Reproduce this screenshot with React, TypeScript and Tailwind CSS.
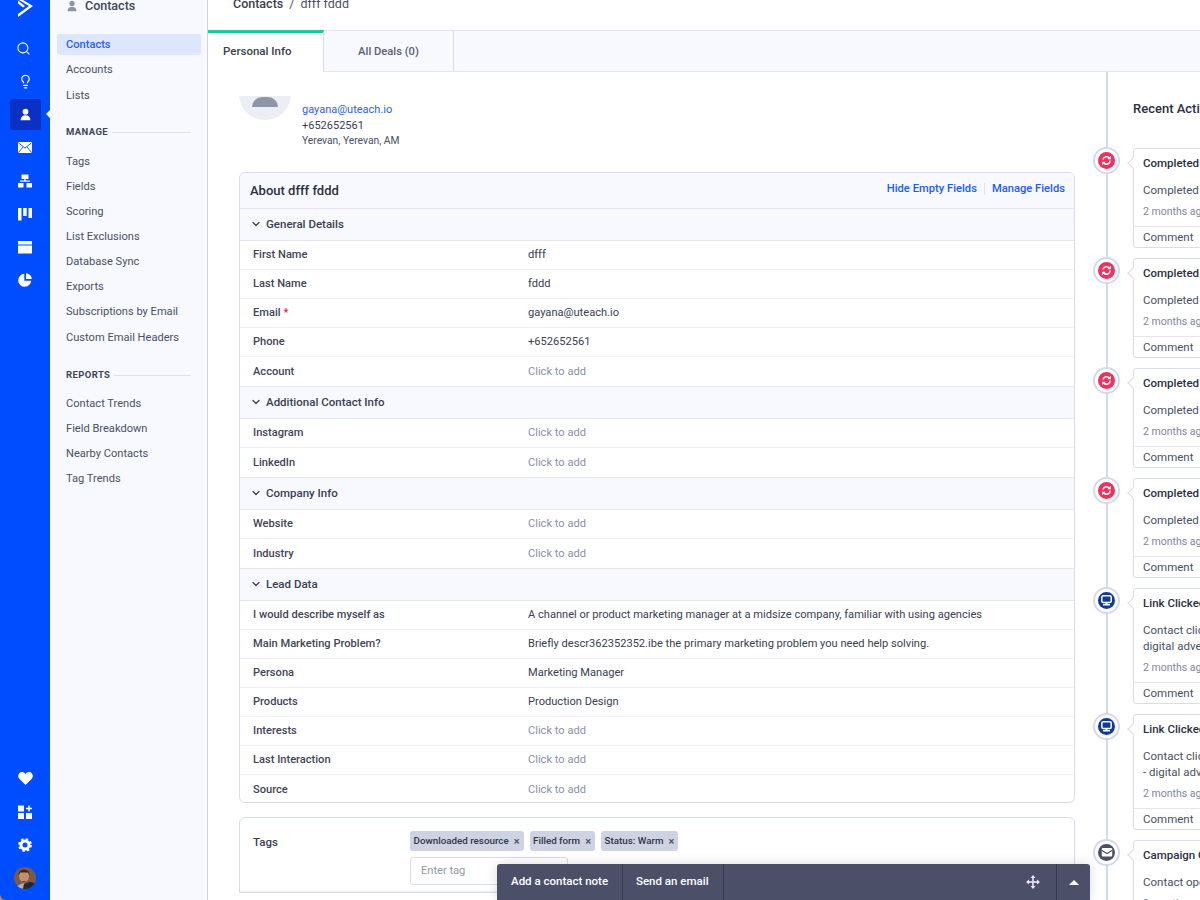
import React from "react";
import { Search, Lightbulb, ChevronDown } from "lucide-react";

const font = "font-['Roboto','Liberation_Sans',sans-serif]";

function UserIcon({ c = "#fff", s = 16 }: { c?: string; s?: number }) {
  return (
    <svg width={s} height={s} viewBox="0 0 16 16" fill={c}>
      <circle cx="8" cy="4.5" r="3.5" />
      <path d="M2 15c0-4 2.5-6 6-6s6 2 6 6z" />
    </svg>
  );
}

function RailIcon({ children, active }: { children: React.ReactNode; active?: boolean }) {
  return (
    <div className="relative flex h-[33px] w-full items-center justify-center">
      {active && (
        <>
          <div className="absolute left-[10px] top-[1px] h-[31px] w-[31px] rounded-[3px] bg-[#0a30c4]" />
          <div className="absolute left-[46px] top-[12px] h-0 w-0 border-y-[4px] border-r-[4px] border-y-transparent border-r-white" />
        </>
      )}
      <div className="relative flex items-center justify-center">{children}</div>
    </div>
  );
}

function Rail() {
  return (
    <div className="h-full w-[50px] shrink-0 bg-[#d9822b]">
      <div className="flex h-full w-full flex-col items-center rounded-bl-[6px] bg-[#004cff]">
        <svg width="20" height="18" viewBox="0 0 20 18" className="-ml-[1px] shrink-0" fill="#fff">
          <path d="M3 -3 L18 6 L3 17 L3 14 L14 6 L3 -0.500z" />
          <path d="M3 0.500 L10 6 L8 7.500 L3 3.500z" />
        </svg>
        <div className="mt-[14px] w-full">
          <RailIcon><div className="-ml-[3px]"><Search size={15} color="#fff" strokeWidth={1.7} /></div></RailIcon>
          <RailIcon><Lightbulb size={15} color="#fff" strokeWidth={2} /></RailIcon>
          <RailIcon active><UserIcon s={13} /></RailIcon>
          <RailIcon>
            <svg width="14" height="11" viewBox="0 0 14 11"><rect width="14" height="11" rx="1" fill="#fff" /><path d="M0.500 1 L7 6 L13.500 1 M0.500 10.500 L5 5 M13.500 10.500 L9 5" stroke="#004cff" strokeWidth="0.9" fill="none" /></svg>
          </RailIcon>
          <RailIcon>
            <svg width="14" height="14" viewBox="0 0 14 14" fill="#fff"><rect x="3.500" y="0.500" width="7" height="4.500" /><rect x="6.300" y="5" width="1.400" height="2" /><rect x="2" y="6.500" width="10" height="1.200" /><rect x="0" y="9" width="5.500" height="4.500" /><rect x="8.500" y="9" width="5.500" height="4.500" /></svg>
          </RailIcon>
          <RailIcon>
            <svg width="14" height="14" viewBox="0 0 14 14" fill="#fff"><rect x="0" y="1" width="3.500" height="12.500" /><rect x="5.200" y="1" width="3.500" height="8" /><rect x="10.500" y="1" width="3.500" height="10" /></svg>
          </RailIcon>
          <RailIcon>
            <svg width="14" height="14" viewBox="0 0 14 14" fill="#fff"><path d="M0 1h14v3.500H0z" /><path d="M0 5.500h14V13.500H0z" /></svg>
          </RailIcon>
          <RailIcon>
            <svg width="14" height="14" viewBox="0 0 14 14" fill="#fff"><path d="M6.300 0.800A6.500 6.500 0 1 0 13.200 7.700H6.300z" /><path d="M8 0.200A6 6 0 0 1 13.800 6H8z" /></svg>
          </RailIcon>
        </div>
        <div className="mt-auto w-full pb-[11px]">
          <RailIcon>
            <svg width="15" height="13" viewBox="0 0 15 13" fill="#fff"><path d="M7.500 13 L1 6.500 C-1 3.500 1 0 4 0 C5.500 0 6.800 0.800 7.500 2 C8.200 0.800 9.500 0 11 0 C14 0 16 3.500 14 6.500Z" /></svg>
          </RailIcon>
          <RailIcon>
            <svg width="14" height="14" viewBox="0 0 14 14" fill="#fff"><rect x="0" y="0.500" width="6" height="6" /><rect x="0" y="8" width="6" height="6" /><rect x="8" y="8" width="6" height="6" /><path d="M10.300 0.500h1.400v2.300H14v1.400h-2.300v2.300h-1.400V4.200H8V2.800h2.300z" /></svg>
          </RailIcon>
          <RailIcon>
            <svg width="14" height="14" viewBox="0 0 14 14"><circle cx="7" cy="7" r="4" fill="none" stroke="#fff" strokeWidth="3" /><circle cx="7" cy="7" r="5.800" fill="none" stroke="#fff" strokeWidth="2.200" strokeDasharray="2.400 2.150" /></svg>
          </RailIcon>
          <div className="mt-[6px] flex justify-center">
            <svg width="22" height="22" viewBox="0 0 22 22" className="rounded-full">
              <rect width="22" height="22" fill="#7d5a44" />
              <ellipse cx="10" cy="9.500" rx="5" ry="6" fill="#c0906f" />
              <path d="M4.500 8C4 1 16 1 15.500 8L14.500 5.500H6z" fill="#3a2419" />
              <path d="M5.500 11C6.500 16.500 13.500 16.500 14.500 11L13.500 14H6.500z" fill="#6a4630" />
              <path d="M7 22C8 17 14 15 17 15S22 18 22 22z" fill="#1c2b3a" />
              <path d="M2 22C3 18 7 17 10 16L9 22z" fill="#a9b3bf" />
            </svg>
          </div>
        </div>
      </div>
    </div>
  );
}

function NavItem({ label, active }: { label: string; active?: boolean }) {
  return (
    <div className={`flex h-[21px] items-center px-[9px] pt-[2px] text-[11.1px] ${active ? "rounded-[3px] bg-[#dde7fb] font-medium text-[#2a62f0]" : "text-[#4a5062]"}`}>
      {label}
    </div>
  );
}

function NavHeading({ label }: { label: string }) {
  return (
    <div className="flex h-[16px] items-center gap-[4px] pl-[9px] pr-[10px]">
      <span className="text-[9.5px] font-bold tracking-[0.4px] text-[#3f4556]">{label}</span>
      <div className="h-px flex-1 bg-[#dfe2ee]" />
    </div>
  );
}

function Sidebar() {
  return (
    <div className="h-full w-[158px] shrink-0 border-r border-[#cfd3e6] bg-[#f7f9fe] pl-[7px] pr-[6px]">
      <div className="-mt-[4px] flex h-[20px] items-center gap-[7px] pl-[9px]">
        <UserIcon c="#8f95a8" s={12} />
        <span className="text-[12.5px] font-medium text-[#3f4556]">Contacts</span>
      </div>
      <div className="mt-[18px] flex flex-col gap-[4.2px]">
        <NavItem label="Contacts" active />
        <NavItem label="Accounts" />
        <NavItem label="Lists" />
      </div>
      <div className="mt-[19px]"><NavHeading label="MANAGE" /></div>
      <div className="mt-[10px] flex flex-col gap-[4.150px]">
        {["Tags", "Fields", "Scoring", "List Exclusions", "Database Sync", "Exports", "Subscriptions by Email", "Custom Email Headers"].map((l) => (
          <NavItem key={l} label={l} />
        ))}
      </div>
      <div className="mt-[20px]"><NavHeading label="REPORTS" /></div>
      <div className="mt-[9px] flex flex-col gap-[4.200px]">
        {["Contact Trends", "Field Breakdown", "Nearby Contacts", "Tag Trends"].map((l) => (
          <NavItem key={l} label={l} />
        ))}
      </div>
    </div>
  );
}

function Section({ title }: { title: string }) {
  return (
    <div className="flex h-[33px] items-center gap-[4px] border-y border-[#e3e6f0] bg-[#f7f9fe] pb-[0.5px] pl-[10px] text-[11.5px] font-medium text-[#3a4050]">
      <ChevronDown size={12} strokeWidth={2.5} color="#3a4050" />
      {title}
    </div>
  );
}

function Row({ label, value, req, last }: { label: string; value?: string; req?: boolean; last?: boolean }) {
  return (
    <div className={`flex h-[29px] items-center pl-[13px] pt-[1.5px] text-[11.1px] ${last ? "" : "border-b border-[#eef0f6]"}`}>
      <div className="w-[275px] font-medium text-[#3f4556]">
        {label}
        {req && <span className="ml-[3px] text-[#e8264f]">*</span>}
      </div>
      <div className={value ? "text-[#3a4050]" : "text-[#8b90a5]"}>{value ?? "Click to add"}</div>
    </div>
  );
}

function AboutCard() {
  return (
    <div className="mx-[31px] h-[631px] overflow-hidden rounded-[6px] border border-[#d9dcea]">
      <div className="flex h-[35px] items-center justify-between bg-[#f7f9fe] pl-[10px] pr-[9px]">
        <span className="mt-[1px] text-[13px] font-medium text-[#2b3040]">About dfff fddd</span>
        <div className="-mt-[3px] flex items-center text-[11.2px] font-medium text-[#1f5bf0]">
          <span>Hide Empty Fields</span>
          <div className="mx-[7px] h-[12px] w-px bg-[#dfe2ee]" />
          <span>Manage Fields</span>
        </div>
      </div>
      <Section title="General Details" />
      <Row label="First Name" value="dfff" />
      <Row label="Last Name" value="fddd" />
      <Row label="Email" value="gayana@uteach.io" req />
      <Row label="Phone" value="+652652561" />
      <Row label="Account" last />
      <Section title="Additional Contact Info" />
      <Row label="Instagram" />
      <Row label="LinkedIn" last />
      <Section title="Company Info" />
      <Row label="Website" />
      <Row label="Industry" last />
      <Section title="Lead Data" />
      <Row label="I would describe myself as" value="A channel or product marketing manager at a midsize company, familiar with using agencies" />
      <Row label="Main Marketing Problem?" value="Briefly descr362352352.ibe the primary marketing problem you need help solving." />
      <Row label="Persona" value="Marketing Manager" />
      <Row label="Products" value="Production Design" />
      <Row label="Interests" />
      <Row label="Last Interaction" />
      <Row label="Source" last />
    </div>
  );
}

function Tag({ label }: { label: string }) {
  return (
    <div className="flex h-[20px] items-center gap-[5px] whitespace-nowrap rounded-[3px] bg-[#ced3e4] pl-[3.500px] pr-[4px] text-[9.8px] font-medium text-[#2f3545]">
      {label}
      <span className="text-[11px] leading-none text-[#4a5062]">×</span>
    </div>
  );
}

function TagsCard() {
  return (
    <div className="mx-[31px] mt-[14px] rounded-t-[6px] border border-[#d9dcea]">
      <div className="flex h-[74px] border-b border-[#eef0f6] pl-[13px] pt-[13px]">
        <div className="mt-[3px] w-[157px] text-[11.5px] font-medium text-[#3a4050]">Tags</div>
        <div>
          <div className="flex gap-[6px]">
            <Tag label="Downloaded resource" />
            <Tag label="Filled form" />
            <Tag label="Status: Warm" />
          </div>
          <div className="mt-[6px] flex h-[28px] w-[158px] items-center rounded-[3px] border border-[#d9dcea] pl-[10px] text-[11.1px] text-[#9297aa]">Enter tag</div>
        </div>
      </div>
    </div>
  );
}

function Marker({ kind }: { kind: "sync" | "link" | "mail" }) {
  const bg = kind === "sync" ? "bg-[#f0305e]" : kind === "link" ? "bg-[#0f3a9c]" : "bg-[#4b5068]";
  return (
    <div className="absolute -left-[41px] top-[-2px] flex h-[27px] w-[27px] items-center justify-center rounded-full border-2 border-[#d5d9e8] bg-white">
      <div className={`flex h-[17px] w-[17px] items-center justify-center rounded-full ${bg}`}>
        {kind === "sync" && (
          <svg width="11" height="11" viewBox="0 0 11 11" fill="none" stroke="#fff" strokeWidth="1.500">
            <path d="M2 4.500A3.500 3.500 0 0 1 8.500 3.500" />
            <path d="M9 5.500A3.500 3.500 0 0 1 2.500 7.500" />
            <path d="M9.800 0.800V4.200H6.400z" fill="#fff" stroke="none" />
            <path d="M1.200 10.200V6.800H4.600z" fill="#fff" stroke="none" />
          </svg>
        )}
        {kind === "link" && (
          <svg width="11" height="11" viewBox="0 0 11 11"><rect x="0.800" y="0.800" width="9.400" height="6.800" rx="1.500" fill="none" stroke="#fff" strokeWidth="1.500" /><rect x="4.500" y="7.500" width="2" height="1.500" fill="#fff" /><rect x="2" y="9" width="7" height="1.500" fill="#fff" /></svg>
        )}
        {kind === "mail" && (
          <svg width="12" height="11" viewBox="0 0 12 11"><rect x="0.800" y="1" width="10.400" height="8.600" rx="1" fill="#fff" /><path d="M1 3.500 L6 6.500 L11 3.500" stroke="#4b5068" strokeWidth="1.100" fill="none" /></svg>
        )}
      </div>
    </div>
  );
}

type Act = { kind: "sync" | "link" | "mail"; title: string; lines: string[]; h: string };

const acts: Act[] = [
  { kind: "sync", title: "Completed a campaign", lines: ["Completed automation"], h: "h-[100px]" },
  { kind: "sync", title: "Completed a campaign", lines: ["Completed automation"], h: "h-[100px]" },
  { kind: "sync", title: "Completed a campaign", lines: ["Completed automation"], h: "h-[100px]" },
  { kind: "sync", title: "Completed a campaign", lines: ["Completed automation"], h: "h-[100px]" },
  { kind: "link", title: "Link Clicked", lines: ["Contact clicked a link", "digital advertising"], h: "h-[116px]" },
  { kind: "link", title: "Link Clicked", lines: ["Contact clicked a link", "- digital advertising"], h: "h-[116px]" },
  { kind: "mail", title: "Campaign Opened", lines: ["Contact opened"], h: "h-[100px]" },
];

function Timeline() {
  return (
    <div className="w-[94px] shrink-0 border-l-2 border-[#d5d9e8] pl-[25px] pt-[29px]">
      <div className="whitespace-nowrap text-[13px] font-medium leading-[16px] text-[#2b3040]">Recent Activities</div>
      <div className="mt-[31px] flex flex-col gap-[10px]">
        {acts.map((a, i) => (
          <div key={i} className={`relative ${a.h} w-[120px] shrink-0 rounded-[3px] border border-[#d9dcea] bg-white`}>
            <Marker kind={a.kind} />
            <div className="absolute -left-[5px] top-[10px] h-[8px] w-[8px] rotate-45 border-b border-l border-[#d9dcea] bg-white" />
            <div className="flex h-full flex-col overflow-hidden whitespace-nowrap pl-[9px] text-[11.5px]">
              <div className="mt-[5.5px] font-medium leading-[16px] text-[#2b3040]">{a.title}</div>
              <div className="mt-[11px] leading-[16px] text-[#4a5062]">
                {a.lines.map((l) => <div key={l}>{l}</div>)}
              </div>
              <div className="mt-[7.5px] text-[10.500px] leading-[14px] text-[#7f869c]">2 months ago</div>
              <div className="-ml-[9px] mt-auto flex h-[21px] items-center border-t border-[#e3e6f0] pl-[9px] pt-[1px] text-[#4a5062]">Comment</div>
            </div>
          </div>
        ))}
      </div>
    </div>
  );
}

function BottomBar() {
  return (
    <div className="absolute bottom-0 left-[497px] flex h-[36px] w-[593px] items-center rounded-t-[3px] bg-[#4b5068] text-[11.5px] font-medium text-white shadow-[0_0_12px_rgba(0,0,0,0.15)]">
      <div className="flex h-full w-[126px] items-center border-r border-[#383c50] pl-[14px]">Add a contact note</div>
      <div className="flex h-full w-[101px] items-center border-r border-[#383c50] pl-[13px]">Send an email</div>
      <div className="ml-auto flex h-full items-center pr-[16px]">
        <svg width="14" height="14" viewBox="0 0 14 14" fill="#e8eaf2">
          <rect x="6.200" y="2" width="1.600" height="10" />
          <rect x="2" y="6.200" width="10" height="1.600" />
          <path d="M7 0L9.500 3H4.500zM7 14L4.500 11H9.500zM0 7L3 4.500V9.500zM14 7L11 9.500V4.500z" />
        </svg>
      </div>
      <div className="flex h-full w-[34px] items-center justify-center border-l border-[#383c50]">
        <div className="h-0 w-0 border-x-[5px] border-b-[5px] border-x-transparent border-b-white" />
      </div>
    </div>
  );
}

export default function App() {
  return (
    <div className={`relative flex h-[900px] w-[1200px] overflow-hidden bg-white ${font}`}>
      <Rail />
      <Sidebar />
      <div className="flex h-full min-w-0 flex-1 flex-col">
        <div className="flex h-[30px] shrink-0 items-start pl-[25px] text-[12.5px] leading-[8px]">
          <span className="font-medium text-[#3a4050]">Contacts</span>
          <span className="mx-[6px] text-[#4a5062]">/</span>
          <span className="text-[#4a5062]">dfff fddd</span>
        </div>
        <div className="flex h-[42px] shrink-0 border-y border-[#e3e6f0] bg-[#f7f9fe]">
          <div className="-mb-px -mt-px flex w-[116px] items-center border-r border-[#d9dcea] border-t-[3px] border-t-[#1fc8a0] bg-white pl-[15px] pb-[1px] text-[11.5px] font-medium text-[#3a4050]">Personal Info</div>
          <div className="flex w-[130px] items-center justify-center border-r border-[#d9dcea] pt-[2px] text-[11.2px] font-medium text-[#5a6074]">All Deals (0)</div>
        </div>
        <div className="flex min-h-0 flex-1">
          <div className="w-[898px] shrink-0">
            <div className="mt-[24px] flex h-[76px] pl-[31px]">
              <div className="h-[24px] w-[52px] overflow-hidden">
                <div className="-mt-[28px] flex h-[52px] w-[52px] items-end justify-center rounded-full bg-[#eceef6] pb-[13px]">
                  <div className="h-[10px] w-[26px] rounded-t-full bg-[#8f95a8]" />
                </div>
              </div>
              <div className="ml-[11px] mt-[6px] text-[11px]">
                <div className="leading-[16px] text-[#2a62f0]">gayana@uteach.io</div>
                <div className="leading-[16px] text-[#3a4050]">+652652561</div>
                <div className="text-[10.300px] leading-[14px] text-[#4a5062]">Yerevan, Yerevan, AM</div>
              </div>
            </div>
            <AboutCard />
            <TagsCard />
          </div>
          <Timeline />
        </div>
      </div>
      <BottomBar />
    </div>
  );
}
